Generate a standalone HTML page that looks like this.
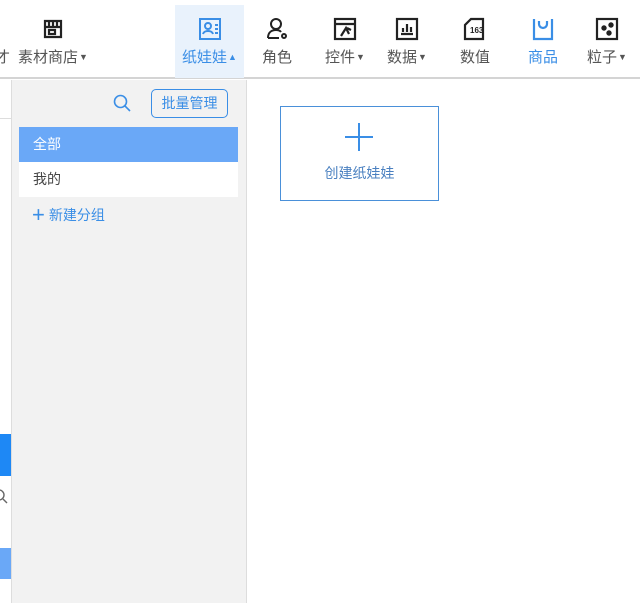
<!DOCTYPE html>
<html><head><meta charset="utf-8"><style>
*{margin:0;padding:0;box-sizing:border-box}
body{width:640px;height:603px;background:#fff;position:relative;overflow:hidden;font-family:"Liberation Sans","Noto Sans CJK SC",sans-serif;font-size:14px;color:#333}
.a{position:absolute}
.nav{position:absolute;top:0;left:0;width:640px;height:79px;border-bottom:2px solid #d4d4d4}
.it{position:absolute;top:0;height:78px;text-align:center}
.it svg{position:absolute;top:16px;left:50%;margin-left:-13px}
.it .l{position:absolute;top:46px;left:-10px;right:-10px;font-size:15px;color:#555;white-space:nowrap}
.tri{font-size:9px;vertical-align:2px;margin-left:1px}
</style></head><body>
<div class="nav">
<div class="a" style="left:-5px;top:46px;color:#555;font-size:15px">才</div>
<div class="it" style="left:18px;width:70px"><svg width="26" height="26" viewBox="0 0 26 26" fill="none" stroke="#222" stroke-width="2.2"><path d="M5 5h16v16H5z"/><path d="M5 11h16M9 5v6M13 5v6M17 5v6"/><rect x="9" y="14" width="6" height="4"/></svg><div class="l">素材商店<span class="tri">▼</span></div></div>
<div class="it" style="left:175px;width:69px;top:5px;height:73px;background:#e9f2fc"><svg style="top:11px" width="26" height="26" viewBox="0 0 26 26" fill="none" stroke="#3a8ee6" stroke-width="2"><rect x="3" y="3" width="20" height="20"/><circle cx="11" cy="10" r="3"/><path d="M6 18c1-4 9-4 10 0M18 9h3M18 13h3M18 17h3"/></svg><div class="l" style="top:41px;color:#3a8ee6">纸娃娃<span class="tri">▲</span></div></div>
<div class="it" style="left:252px;width:50px"><svg width="26" height="26" viewBox="0 0 26 26" fill="none" stroke="#222" stroke-width="2"><circle cx="12" cy="8" r="5"/><path d="M4 22c0-6 4-8 8-8 2 0 4 .5 5 2"/><path d="M4 22h11"/><circle cx="20" cy="20" r="2"/></svg><div class="l">角色</div></div>
<div class="it" style="left:320px;width:50px"><svg width="26" height="26" viewBox="0 0 26 26" fill="none" stroke="#222" stroke-width="2.2"><rect x="3" y="3" width="20" height="20"/><path d="M3 8h20M9 20l5-8 3 6M15 12l4 2"/></svg><div class="l">控件<span class="tri">▼</span></div></div>
<div class="it" style="left:382px;width:50px"><svg width="26" height="26" viewBox="0 0 26 26" fill="none" stroke="#222" stroke-width="2.2"><rect x="3" y="3" width="20" height="20"/><path d="M7 18h12M9 16v-4M13 16V8M17 16v-5"/></svg><div class="l">数据<span class="tri">▼</span></div></div>
<div class="it" style="left:450px;width:50px"><svg width="26" height="26" viewBox="0 0 26 26" fill="none" stroke="#222" stroke-width="2.2"><path d="M9 3h12v20H3V9z"/><text x="8" y="17" font-size="8" font-weight="bold" fill="#222" stroke="none" font-family="Liberation Sans">163</text></svg><div class="l">数值</div></div>
<div class="it" style="left:518px;width:50px"><svg width="26" height="26" viewBox="0 0 26 26" fill="none" stroke="#3a8ee6" stroke-width="2.2"><path d="M4 3v20h18V3"/><path d="M9 5v3a4 4 0 0 0 8 0V5"/></svg><div class="l" style="color:#3a8ee6">商品</div></div>
<div class="it" style="left:582px;width:50px"><svg width="26" height="26" viewBox="0 0 26 26" fill="none" stroke="#222" stroke-width="2.2"><rect x="3" y="3" width="20" height="20"/><circle cx="17" cy="9" r="1.6" fill="#222"/><circle cx="10" cy="12" r="1.6" fill="#222"/><circle cx="15" cy="17" r="1.6" fill="#222"/></svg><div class="l">粒子<span class="tri">▼</span></div></div>
</div>
<div class="a" style="left:0;top:118px;width:11px;height:1px;background:#ddd"></div>
<div class="a" style="left:0;top:434px;width:11px;height:42px;background:#1e88f5"></div>
<svg class="a" style="left:-8px;top:488px" width="18" height="18" viewBox="0 0 18 18" fill="none" stroke="#666" stroke-width="1.4"><circle cx="7" cy="7" r="5"/><path d="M11 11l4 4"/></svg>
<div class="a" style="left:0;top:548px;width:11px;height:31px;background:#6aa8f7"></div>
<div class="a" style="left:11px;top:80px;width:236px;height:523px;background:#f2f2f2;border-left:1px solid #ddd;border-right:1px solid #ddd"></div>
<svg class="a" style="left:112px;top:93px" width="20" height="20" viewBox="0 0 20 20" fill="none" stroke="#3a8ee6" stroke-width="1.6"><circle cx="8.5" cy="8.5" r="6"/><path d="M13 13l5 5"/></svg>
<div class="a" style="left:151px;top:89px;width:77px;height:29px;border:1px solid #3a8ee6;border-radius:5px;color:#3a8ee6;text-align:center;line-height:27px;font-size:14px">批量管理</div>
<div class="a" style="left:19px;top:127px;width:219px;height:35px;background:#6aa8f7;color:#fff;line-height:35px;padding-left:14px">全部</div>
<div class="a" style="left:19px;top:162px;width:219px;height:35px;background:#fff;color:#444;line-height:35px;padding-left:14px">我的</div>
<div class="a" style="left:32px;top:204px;color:#3a8ee6;line-height:22px"><span style="font-size:22px;vertical-align:-2px;margin-right:4px">+</span>新建分组</div>
<div class="a" style="left:280px;top:106px;width:159px;height:95px;border:1px solid #4a90d9"></div>
<div class="a" style="left:345px;top:136px;width:28px;height:2px;background:#3a8ee6"></div>
<div class="a" style="left:358px;top:123px;width:2px;height:28px;background:#3a8ee6"></div>
<div class="a" style="left:280px;top:163px;width:159px;text-align:center;color:#4a80c0;font-size:14px">创建纸娃娃</div>
</body></html>
